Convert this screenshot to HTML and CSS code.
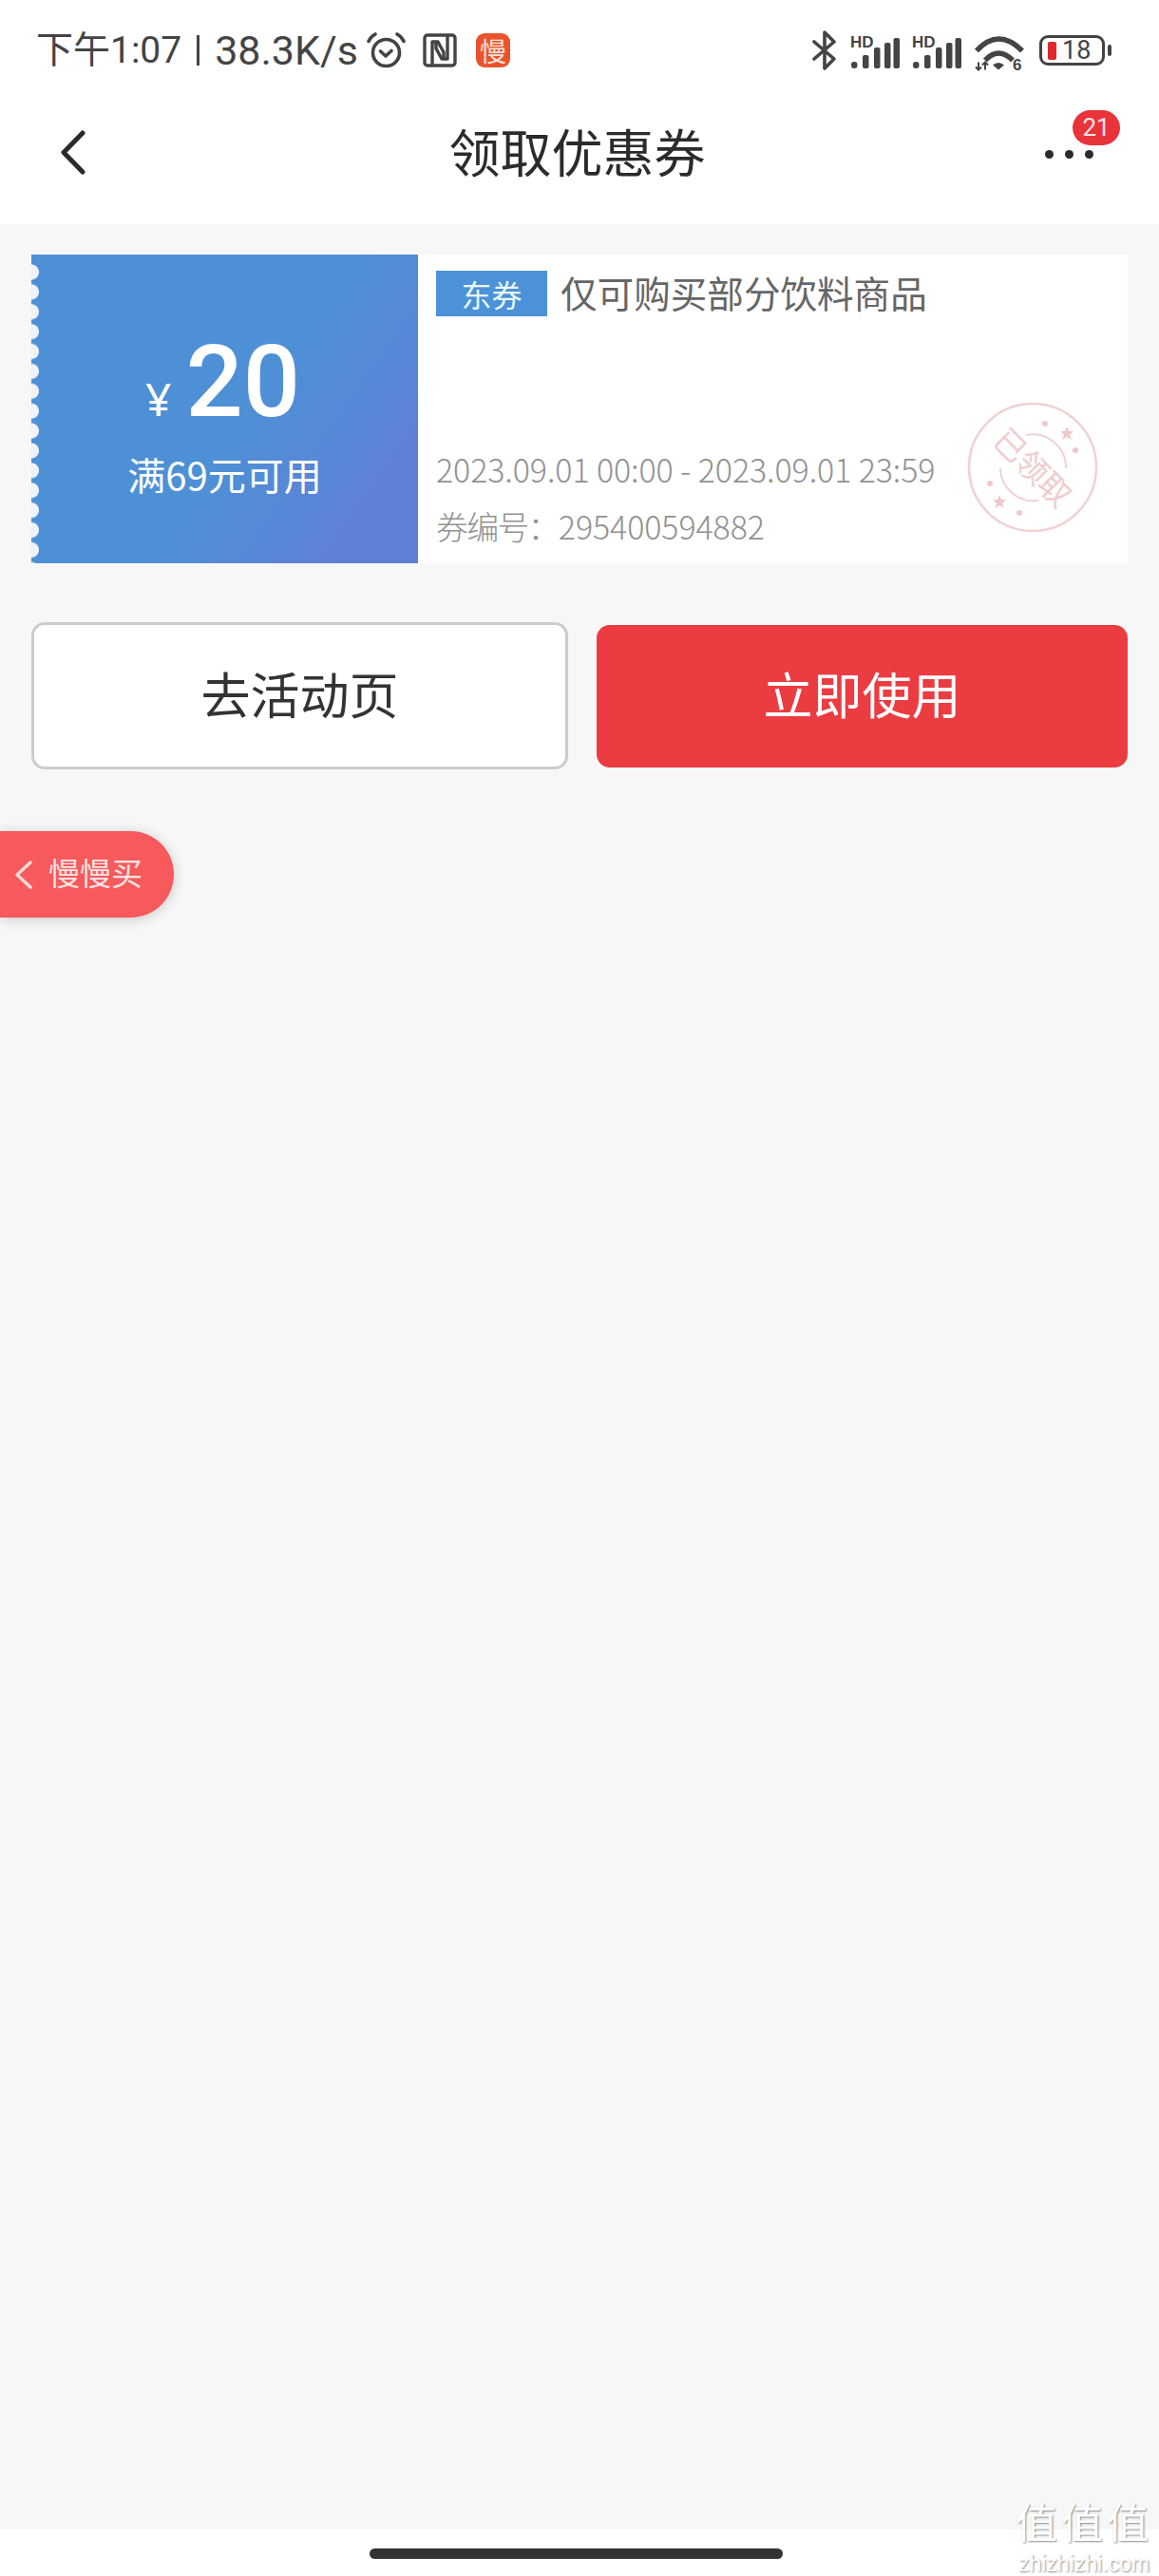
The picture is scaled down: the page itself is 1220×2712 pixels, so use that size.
FILE: index.html
```html
<!DOCTYPE html>
<html lang="zh-CN">
<head>
  <meta charset="UTF-8">
  <title>领取优惠券</title>
  <meta name="viewport" content="width=device-width, initial-scale=1.0">
  <link rel="stylesheet" href="styles.css">
</head>
<body>
  <!-- Status bar -->
  <div class="status-bar">
    <div class="status-left">
      <span class="status-time">下午1:07</span>
      <span class="status-sep"></span>
      <span class="status-speed">38.3K/s</span>
      <svg class="icon-clock" width="43" height="38" viewBox="0 0 43 38" fill="none" stroke="#444" stroke-width="3.6" stroke-linecap="round" stroke-linejoin="round">
        <circle cx="21.5" cy="21.5" r="14"/>
        <path d="M15.5 20l5.5 5 6-5.5"/>
        <path d="M3 9.5C4.5 6 7 3.5 10 2"/>
        <path d="M40 9.5C38.5 6 36 3.5 33 2"/>
      </svg>
      <svg class="icon-nfc" width="36" height="36" viewBox="0 0 36 36" fill="none" stroke="#444" stroke-width="3.4" stroke-linejoin="round">
        <rect x="2" y="2" width="32" height="32" rx="3"/>
        <path d="M10 34V9h6l6 11v7"/>
        <path d="M26 2v25h-6l-6-11V9"/>
      </svg>
      <span class="icon-app">慢</span>
    </div>
    <div class="status-right">
      <svg width="26" height="42" viewBox="0 0 26 42" fill="none" stroke="#444" stroke-width="3.6" stroke-linejoin="round" stroke-linecap="round">
        <path d="M2 12l21 18-10 10V2l10 10L2 30"/>
      </svg>
      <svg class="icon-signal" width="52" height="38" viewBox="0 -4 52 38">
        <text x="0" y="12" class="hd-label">HD</text>
        <rect x="1" y="27" width="6.5" height="7" rx="3" fill="#444"/>
        <rect x="13" y="20" width="6.5" height="14" rx="2" fill="#444"/>
        <rect x="25" y="12" width="6.5" height="22" rx="2" fill="#444"/>
        <rect x="36" y="7" width="6.5" height="27" rx="2" fill="#444"/>
        <rect x="45.5" y="2" width="6.5" height="32" rx="2" fill="#444"/>
      </svg>
      <svg class="icon-signal" width="52" height="38" viewBox="0 -4 52 38">
        <text x="0" y="12" class="hd-label">HD</text>
        <rect x="1" y="27" width="6.5" height="7" rx="3" fill="#444"/>
        <rect x="13" y="20" width="6.5" height="14" rx="2" fill="#444"/>
        <rect x="25" y="12" width="6.5" height="22" rx="2" fill="#444"/>
        <rect x="36" y="7" width="6.5" height="27" rx="2" fill="#444"/>
        <rect x="45.5" y="2" width="6.5" height="32" rx="2" fill="#444"/>
      </svg>
      <svg class="icon-wifi" width="52" height="42" viewBox="0 -2.5 52 42" fill="none">
        <path d="M2 16Q25 -9 50 16" stroke="#444" stroke-width="5.5"/>
        <path d="M11 26Q25 11 40 26" stroke="#444" stroke-width="5.5"/>
        <path d="M19 31L25 36 31 31Q25 26 19 31z" fill="#444"/>
        <path d="M4 28v8M1 33l3 3 3-3M11 36v-8M8 31l3-3 3 3" stroke="#444" stroke-width="2"/>
        <text x="40" y="36" class="wifi-label">6</text>
      </svg>
      <div class="battery">
        <div class="battery-body">
          <span class="battery-fill"></span>
          <span class="battery-num">18</span>
        </div>
        <span class="battery-nub"></span>
      </div>
    </div>
  </div>

  <!-- Title bar -->
  <div class="nav">
    <svg class="nav-back" width="26" height="47" viewBox="0 0 26 47" fill="none" stroke="#2a2a2a" stroke-width="5" stroke-linecap="round" stroke-linejoin="round">
      <path d="M23 3L3 23.5 23 44"/>
    </svg>
    <div class="nav-title">领取优惠券</div>
    <div class="nav-more">
      <span class="dot"></span>
      <span class="dot"></span>
      <span class="dot"></span>
      <span class="badge">21</span>
    </div>
  </div>

  <div class="content">
    <!-- Coupon -->
    <div class="coupon">
      <div class="coupon-left">
        <div class="amount"><span class="yen">¥</span><span class="value">20</span></div>
        <div class="condition">满69元可用</div>
      </div>
      <div class="coupon-right">
        <div class="coupon-head">
          <span class="tag">东券</span>
          <span class="coupon-title">仅可购买部分饮料商品</span>
        </div>
        <div class="coupon-meta">
          <div class="meta-line">2023.09.01 00:00 - 2023.09.01 23:59</div>
          <div class="meta-line"><span class="code-label">券编号：</span>295400594882</div>
        </div>
        <svg class="stamp" width="140" height="140" viewBox="0 0 140 140" fill="none" stroke="#f0d2d3">
          <circle cx="70" cy="70" r="67" stroke-width="2.6"/>
          <path d="M63 36A35 35 0 0 1 105 71" stroke-width="2"/>
          <path d="M36 71A35 35 0 0 0 76 105" stroke-width="2"/>
          <polygon points="106,27 108,32 113,32 109,36 111,41 106,38 101,41 103,36 99,32 104,32" fill="#f0c8ca" stroke="none"/>
          <polygon points="35,99 37,104 42,104 38,108 40,113 35,110 30,113 32,108 28,104 33,104" fill="#f0c8ca" stroke="none"/>
          <circle cx="83" cy="24" r="3" fill="#f0c8ca" stroke="none"/>
          <circle cx="115" cy="52" r="3" fill="#f0c8ca" stroke="none"/>
          <circle cx="25" cy="87" r="3" fill="#f0c8ca" stroke="none"/>
          <circle cx="56" cy="118" r="3" fill="#f0c8ca" stroke="none"/>
          <text x="70" y="82" text-anchor="middle" transform="rotate(45 70 70)" class="stamp-text">已领取</text>
        </svg>
      </div>
    </div>

    <!-- Buttons -->
    <div class="actions">
      <div class="btn btn-outline">去活动页</div>
      <div class="btn btn-primary">立即使用</div>
    </div>
  </div>

  <!-- Floating tab -->
  <div class="float-tab">
    <svg width="20" height="32" viewBox="0 0 20 32" fill="none" stroke="#fbdcdc" stroke-width="3.4" stroke-linecap="round" stroke-linejoin="round">
      <path d="M17 3L3 16l14 13"/>
    </svg>
    <span class="float-label">慢慢买</span>
  </div>

  <!-- Bottom gesture area -->
  <div class="home-area">
    <span class="home-bar"></span>
  </div>

  <!-- Watermark -->
  <div class="watermark">
    <div class="wm-big">值值值</div>
    <div class="wm-small">zhizhizhi.com</div>
  </div>
</body>
</html>
```

FILE: styles.css
```css
/* Basic styling */
body {
  margin: 0;
  width: 1220px;
  height: 2712px;
  display: flex;
  flex-direction: column;
  position: relative;
  overflow: hidden;
  background-color: #f7f7f7;
  font-family: "Noto Sans CJK SC", "Noto Sans", sans-serif;
}

/* Status bar */
.status-bar {
  height: 106px;
  padding: 0 50px 0 38px;
  display: flex;
  align-items: center;
  justify-content: space-between;
  background-color: #fff;
  box-sizing: border-box;
}
.status-left {
  display: flex;
  align-items: center;
  color: #444;
}
.status-time,
.status-speed {
  font-family: Roboto, "Noto Sans CJK SC", sans-serif;
  font-size: 39px;
  line-height: 44px;
}
.status-speed {
  font-size: 43px;
}
.status-sep {
  width: 3px;
  height: 32px;
  margin: 0 16px;
  background-color: #444;
}
.icon-clock {
  margin-left: 8px;
}
.icon-nfc {
  margin-left: 17px;
}
.icon-app {
  width: 36px;
  height: 36px;
  margin-left: 20px;
  border-radius: 9px;
  background-color: #e9532c;
  color: #fbe3da;
  font-size: 28px;
  line-height: 36px;
  text-align: center;
}
.status-right {
  display: flex;
  align-items: center;
}
.icon-signal {
  margin-left: 14px;
}
.icon-signal + .icon-signal {
  margin-left: 13px;
}
.icon-wifi {
  margin-left: 14px;
  margin-top: 5px;
}
.hd-label {
  font-family: "Liberation Sans", sans-serif;
  font-size: 17px;
  font-weight: 700;
  fill: #444;
}
.wifi-label {
  font-family: "Liberation Sans", sans-serif;
  font-size: 17px;
  font-weight: 700;
  fill: #444;
}
.battery {
  display: flex;
  align-items: center;
  margin-left: 16px;
}
.battery-body {
  width: 69px;
  height: 32px;
  padding-left: 6px;
  box-sizing: border-box;
  display: flex;
  align-items: center;
  border: 3px solid #444;
  border-radius: 9px;
}
.battery-fill {
  width: 9px;
  height: 19px;
  border-radius: 2px;
  background-color: #e0252b;
}
.battery-num {
  margin-left: 6px;
  font-family: Roboto, sans-serif;
  font-size: 27px;
  line-height: 26px;
  color: #444;
}
.battery-nub {
  width: 4px;
  height: 12px;
  margin-left: 3px;
  border-radius: 2px;
  background-color: #444;
}

/* Title bar */
.nav {
  height: 130px;
  padding: 0 69px 24px 64px;
  display: grid;
  grid-template-columns: 1fr auto 1fr;
  align-items: center;
  box-sizing: border-box;
  background-color: #fff;
}
.nav-back {
  margin-top: 2px;
}
.nav-title {
  font-size: 54px;
  line-height: 70px;
  color: #2b2b2b;
}
.nav-more {
  justify-self: end;
  position: relative;
  display: flex;
  gap: 12px;
  margin-top: 6px;
}
.dot {
  width: 9px;
  height: 9px;
  border-radius: 50%;
  background-color: #2b2b2b;
}
.badge {
  position: absolute;
  left: 29px;
  top: -42px;
  width: 50px;
  height: 37px;
  border-radius: 19px;
  background-color: #e8333a;
  color: #fbe6e6;
  font-family: Roboto, sans-serif;
  font-size: 26px;
  line-height: 37px;
  text-align: center;
}

/* Coupon */
.content {
  flex: 1;
  padding: 32px 33px 0;
}
.coupon {
  height: 325px;
  width: 1154px;
  display: flex;
  background-color: #fff;
}
.coupon-left {
  position: relative;
  width: 407px;
  display: flex;
  flex-direction: column;
  align-items: center;
  background: linear-gradient(125deg, #4e90d6 54%, #5f80d7 86%);
  color: #fff;
}
/* scalloped left edge */
.coupon-left::before {
  content: "";
  position: absolute;
  left: 0;
  top: 8px;
  bottom: 0;
  width: 9px;
  background: radial-gradient(circle at 0 50%, #eff3f9 7.5px, transparent 8.5px) 0 0 / 9px 20.9px repeat-y;
}
.amount {
  display: flex;
  align-items: baseline;
  margin-top: 72px;
  height: 124px;
  padding-right: 4px;
}
.yen {
  margin-right: 15px;
  font-family: "Noto Sans", sans-serif;
  font-size: 48px;
  line-height: 124px;
}
.value {
  font-family: Roboto, sans-serif;
  font-size: 106px;
  font-weight: 500;
  line-height: 124px;
}
.condition {
  margin-top: 7px;
  font-size: 40px;
  line-height: 56px;
}
.coupon-right {
  flex: 1;
  position: relative;
  padding: 17px 0 9px 19px;
  display: flex;
  flex-direction: column;
  justify-content: space-between;
}
.coupon-head {
  display: flex;
  align-items: center;
}
.tag {
  width: 117px;
  height: 48px;
  background-color: #4b92d8;
  color: #e8f8fb;
  font-size: 32px;
  line-height: 48px;
  text-align: center;
}
.coupon-title {
  margin-left: 14px;
  margin-top: -5px;
  font-size: 38.6px;
  line-height: 48px;
  color: #666;
}
.meta-line {
  font-size: 34px;
  line-height: 60px;
  font-weight: 300;
  color: #929292;
  letter-spacing: -0.1px;
}
.code-label {
  letter-spacing: -1.8px;
}
.stamp {
  position: absolute;
  top: 154px;
  left: 577px;
}
.stamp-text {
  font-family: "Noto Sans CJK SC", sans-serif;
  font-size: 33px;
  font-weight: 300;
  fill: #efc7c9;
}

/* Buttons */
.actions {
  margin-top: 62px;
  display: flex;
  align-items: center;
  gap: 30px;
  width: 1155px;
}
.btn {
  box-sizing: border-box;
  font-size: 52px;
  text-align: center;
  border-radius: 14px;
}
.btn-outline {
  width: 565px;
  height: 155px;
  line-height: 143px;
  border: 3px solid #ccc;
  background-color: #fff;
  color: #333;
}
.btn-primary {
  width: 559px;
  height: 150px;
  line-height: 143px;
  background-color: #ea3c41;
  color: #fff;
}

/* Floating tab */
.float-tab {
  position: absolute;
  left: 0;
  top: 875px;
  width: 183px;
  height: 91px;
  padding-left: 15px;
  box-sizing: border-box;
  display: flex;
  align-items: center;
  gap: 16px;
  border-radius: 0 46px 46px 0;
  background-color: #f65a5c;
  box-shadow: 0 2px 14px rgba(0,0,0,0.18);
  color: #fde4e4;
  font-size: 33px;
}
.float-label {
  margin-top: -5px;
}

/* Bottom gesture area */
.home-area {
  height: 49px;
  padding: 20px 8px 0 0;
  box-sizing: border-box;
  display: flex;
  justify-content: center;
  background-color: #fff;
}
.home-bar {
  width: 435px;
  height: 11px;
  border-radius: 6px;
  background-color: #333;
}

/* Watermark */
.watermark {
  position: absolute;
  left: 1068px;
  top: 2622px;
  width: 146px;
  text-align: center;
  color: #fff;
  text-shadow: 1px 1px 2px rgba(0,0,0,0.45);
}
.wm-big {
  font-size: 44px;
  line-height: 64px;
  letter-spacing: 4px;
  white-space: nowrap;
}
.wm-small {
  font-family: "Liberation Sans", sans-serif;
  font-size: 23px;
  line-height: 26px;
  white-space: nowrap;
}
```
